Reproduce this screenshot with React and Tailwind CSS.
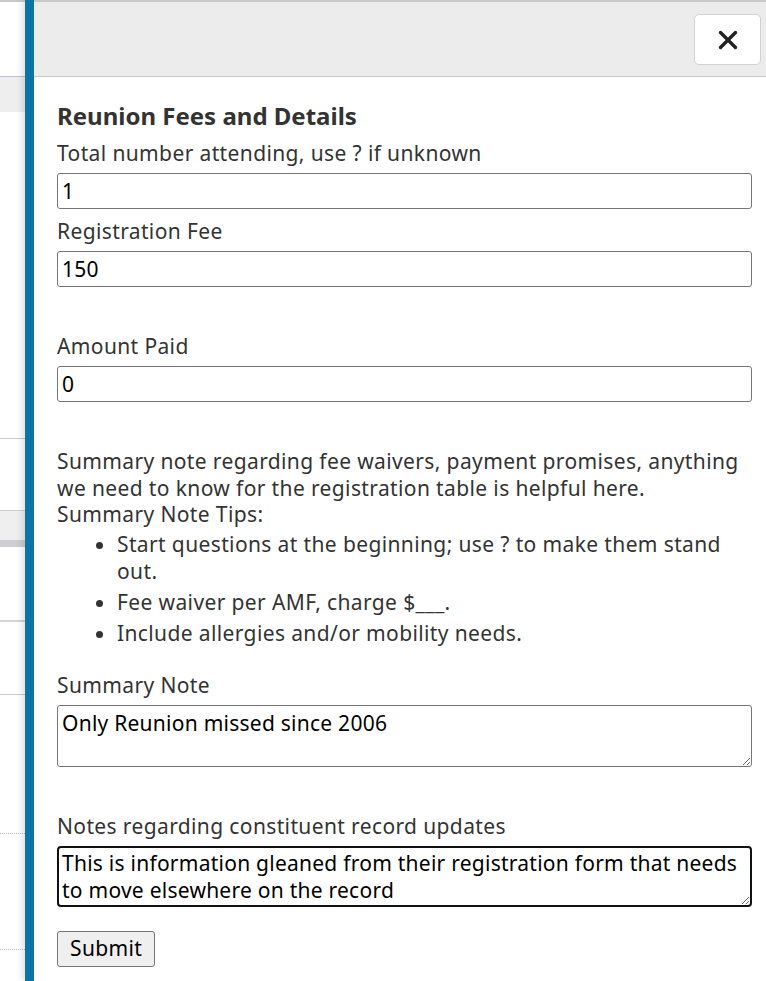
import React, { useState } from "react";

const font = { fontFamily: "'Noto Sans', 'Open Sans', sans-serif" };

// Sliver of the page that sits behind the drawer
const Backdrop = () => (
    <div className="w-[25px] shrink-0 flex flex-col bg-white">
        <div className="h-[76px] border-t-2 border-[#c8c8c8]"></div>
        <div className="h-[36px] border-t border-[#b9c3d3] bg-[#eeeeee]"></div>
        <div className="h-[326px]"></div>
        <div className="h-[72px] border-t border-[#cccccc]"></div>
        <div className="h-[30px] border-t border-[#cfcfcf] bg-[#efefef]"></div>
        <div className="h-[7px] bg-[#cdcdd2]"></div>
        <div className="h-[73px]"></div>
        <div className="h-[74px] border-t-2 border-[#d4d4d4]"></div>
        <div className="h-[139px] border-t border-[#cccccc]"></div>
        <div className="h-[116px] border-t border-dotted border-[#bbbbbb]"></div>
        <div className="flex-1 border-t border-dotted border-[#bbbbbb]"></div>
    </div>
);

const Field = ({ label, value, className = "" }) => (
    <div className={className}>
        <label className="block text-[21px] leading-[28px] text-[#333] mb-[6px]">{label}</label>
        <input
            defaultValue={value}
            className="block w-full h-[36px] px-[4px] text-[21px] tracking-[0.25px] text-black border border-[#767676] rounded-[3px] outline-none"
            style={font}
        />
    </div>
);

export default function App() {
    const [summary, setSummary] = useState("Only Reunion missed since 2006");
    const [notes, setNotes] = useState(
        "This is information gleaned from their registration form that needs to move elsewhere on the record",
    );

    return (
        <div className="flex h-[981px] w-[766px] overflow-hidden bg-white tracking-[0.375px]" style={font}>
            <Backdrop />
            <div className="w-[9px] shrink-0 bg-[#0b74a4] shadow-[-3px_0_6px_rgba(0,0,0,0.12)]"></div>

            <div className="flex-1 flex flex-col">
                {/* Drawer header */}
                <div className="h-[77px] shrink-0 bg-[#ececec] border-t-2 border-b border-[#c8c8c8] flex justify-end items-start pt-[12px] pr-[5px]">
                    <button className="w-[67px] h-[51px] bg-white border border-[#d2d2d2] rounded-[5px] flex items-center justify-center">
                        <svg width="20" height="20" viewBox="0 0 20 20" fill="none">
                            <path d="M2.5 2.5 L17.5 17.5 M17.5 2.5 L2.5 17.5" stroke="#222" strokeWidth="3.4" strokeLinecap="round" />
                        </svg>
                    </button>
                </div>

                {/* Drawer body */}
                <div className="pl-[23px] pr-[14px] pt-[25px] text-[#333]">
                    <h2 className="text-[24px] leading-[28px] font-bold tracking-normal text-[#333]">
                        Reunion Fees and Details
                    </h2>
                    <Field className="mt-[9px]" label="Total number attending, use ? if unknown" value="1" />
                    <Field className="mt-[8px]" label="Registration Fee" value="150" />
                    <Field className="mt-[45px]" label="Amount Paid" value="0" />

                    <div className="mt-[46px] text-[21px] leading-[26.5px]">
                        <p>
                            Summary note regarding fee waivers, payment promises, anything we need to know for the
                            registration table is helpful here.
                        </p>
                        <p>Summary Note Tips:</p>
                        <ul className="list-disc pl-[60px] mt-[3px] leading-[27px]">
                            <li className="mb-[4px]">Start questions at the beginning; use ? to make them stand out.</li>
                            <li className="mb-[4px]">Fee waiver per AMF, charge $___.</li>
                            <li>Include allergies and/or mobility needs.</li>
                        </ul>
                    </div>

                    <div className="mt-[24px]">
                        <label className="block text-[21px] leading-[28px] text-[#333] mb-[6px]">Summary Note</label>
                        <textarea
                            value={summary}
                            onChange={(e) => setSummary(e.target.value)}
                            className="block w-full h-[62px] px-[4px] py-[4px] text-[21px] leading-[27px] tracking-[0.25px] text-black border border-[#767676] rounded-[3px] outline-none"
                            style={font}
                        />
                    </div>

                    <div className="mt-[45px]">
                        <label className="block text-[21px] leading-[28px] text-[#333] mb-[6px]">
                            Notes regarding constituent record updates
                        </label>
                        <textarea
                            value={notes}
                            onChange={(e) => setNotes(e.target.value)}
                            className="block w-full h-[61px] px-[3px] py-[2px] text-[21px] leading-[27px] tracking-[0.25px] text-black border-2 border-[#111] rounded-[4px] outline-none"
                            style={font}
                        />
                    </div>

                    <button className="mt-[24px] h-[36px] px-[12px] text-[21px] text-black bg-[#efefef] border border-[#767676] rounded-[3px]">
                        Submit
                    </button>
                </div>
            </div>
        </div>
    );
}
